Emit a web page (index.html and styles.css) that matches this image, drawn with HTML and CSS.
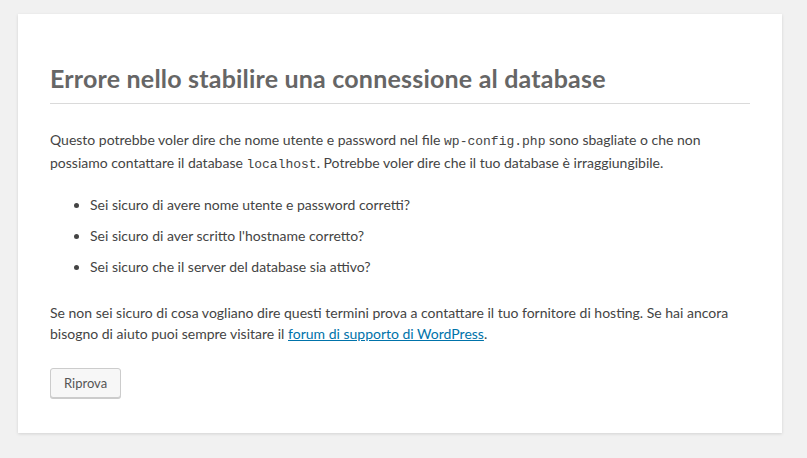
FILE: index.html
```html
<!DOCTYPE html>
<html lang="it-IT">
<head>
    <meta charset="UTF-8">
    <meta name="viewport" content="width=device-width, initial-scale=1.0">
    <title>WordPress &rsaquo; Errore</title>
    <link rel="stylesheet" href="styles.css">
</head>
<body id="error-page">
    <h1>Errore nello stabilire una connessione al database</h1>

    <p>Questo potrebbe voler dire che nome utente e password nel file <code>wp-config.php</code> sono sbagliate o che non possiamo contattare il database <code>localhost</code>. Potrebbe voler dire che il tuo database è irraggiungibile.</p>

    <ul>
        <li>Sei sicuro di avere nome utente e password corretti?</li>
        <li>Sei sicuro di aver scritto l'hostname corretto?</li>
        <li>Sei sicuro che il server del database sia attivo?</li>
    </ul>

    <p>Se non sei sicuro di cosa vogliano dire questi termini prova a contattare il tuo fornitore di hosting. Se hai ancora bisogno di aiuto puoi sempre visitare il <a href="#">forum di supporto di WordPress</a>.</p>

    <p class="actions"><a class="button button-large" href="#">Riprova</a></p>
</body>
</html>
```

FILE: styles.css
```css
html {
    background: #f1f1f1;
}

body {
    background: #fff;
    color: #444;
    font-family: Lato, "Noto Sans", sans-serif;
    width: 700px;
    margin: 14px 0 0 18px;
    padding: 16px 32px;
    box-shadow: 0 1px 3px rgba(0, 0, 0, 0.13);
}

h1 {
    border-bottom: 1px solid #dadada;
    color: #666;
    font-size: 25px;
    letter-spacing: 0.2px;
    line-height: 36px;
    margin: 30px 0 0 0;
    padding: 0 0 7px;
}

p {
    font-size: 14px;
    line-height: 1.5;
    margin: 25px 0 20px;
}

ul {
    margin: 0;
    padding-left: 40px;
}

ul li {
    margin-bottom: 10px;
    font-size: 14px;
    line-height: 1.5;
}

code {
    font-family: "Liberation Mono", monospace;
    font-size: 13px;
}

a {
    color: #0073aa;
}

.actions {
    margin: 24px 0 19px;
}

.button {
    display: inline-block;
    background: #f7f7f7;
    border: 1px solid #ccc;
    color: #555;
    text-decoration: none;
    font-size: 13px;
    height: 30px;
    line-height: 28px;
    padding: 0 13px 2px;
    box-sizing: border-box;
    border-radius: 3px;
    box-shadow: 0 1px 0 #ccc;
    vertical-align: top;
}
```
